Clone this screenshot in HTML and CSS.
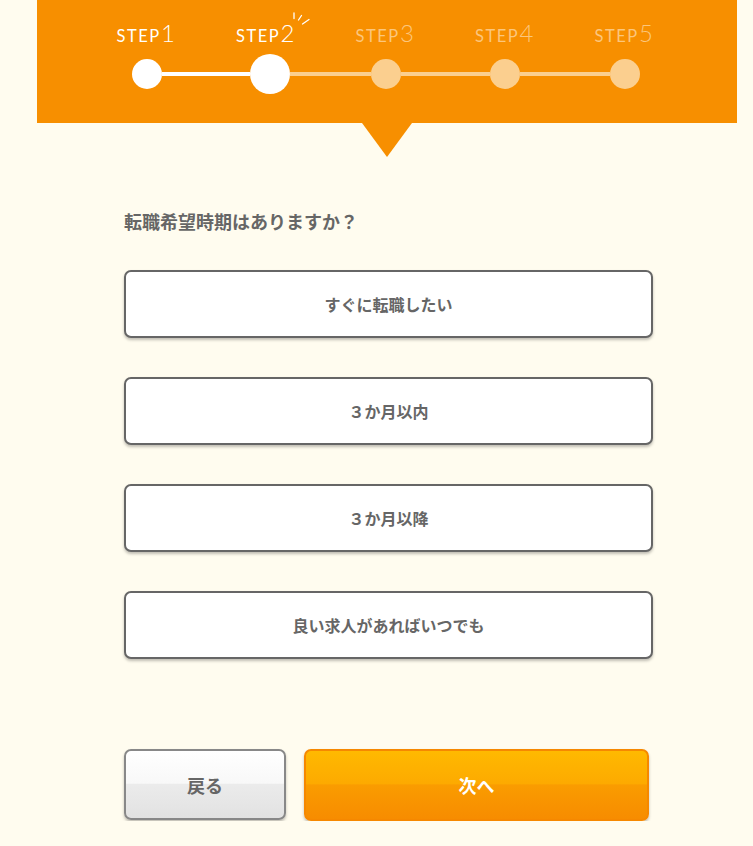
FILE: index.html
```html
<!DOCTYPE html>
<html lang="ja">
<head>
<meta charset="utf-8">
<title>STEP2</title>
<link rel="stylesheet" href="styles.css">
</head>
<body>
<div class="page">
  <header class="steps">
    <div class="labels">
      <div class="label on"><span class="word">STEP</span><span class="num">1</span></div>
      <div class="label on cur"><span class="word">STEP</span><span class="num">2</span>
        <svg class="spark" width="22" height="16" viewBox="0 0 22 16"><g stroke="#fff" stroke-width="1.3" stroke-linecap="round" fill="none"><line x1="4" y1="2" x2="4" y2="7.5"/><line x1="8.5" y1="9" x2="11.5" y2="4.5"/><line x1="12.5" y1="13" x2="19" y2="8.5"/></g></svg>
      </div>
      <div class="label"><span class="word">STEP</span><span class="num">3</span></div>
      <div class="label"><span class="word">STEP</span><span class="num">4</span></div>
      <div class="label"><span class="word">STEP</span><span class="num">5</span></div>
    </div>
    <div class="track">
      <span class="dot on"></span>
      <span class="seg on s1"></span>
      <span class="dot on big"></span>
      <span class="seg s2"></span>
      <span class="dot"></span>
      <span class="seg s3"></span>
      <span class="dot"></span>
      <span class="seg s4"></span>
      <span class="dot"></span>
    </div>
  </header>

  <main class="content">
    <p class="question">転職希望時期はありますか？</p>
    <div class="options">
      <button class="option">すぐに転職したい</button>
      <button class="option">３か月以内</button>
      <button class="option">３か月以降</button>
      <button class="option">良い求人があればいつでも</button>
    </div>
    <div class="nav">
      <button class="btn back">戻る</button>
      <button class="btn next">次へ</button>
    </div>
  </main>
</div>
</body>
</html>
```

FILE: styles.css
```css
html, body {
  margin: 0;
  padding: 0;
  background: #fffcef;
}
body {
  font-family: "Noto Sans CJK JP", "Noto Sans", sans-serif;
  color: #666;
}
.page {
  width: 700px;
  margin-left: 37px;
}
.steps {
  position: relative;
  height: 123px;
  background: #f78f00;
  box-sizing: border-box;
  padding-top: 21px;
}
.steps::after {
  content: "";
  position: absolute;
  left: 325px;
  top: 123px;
  border-left: 25px solid transparent;
  border-right: 25px solid transparent;
  border-top: 34px solid #f78f00;
}
.labels {
  display: flex;
  margin-left: 49px;
  height: 24px;
}
.label {
  position: relative;
  width: 119.5px;
  text-align: center;
  font-family: "Lato", "Open Sans", sans-serif;
  line-height: 24px;
  color: #fcc67c;
  white-space: nowrap;
}
.label.on { color: #fff; }
.label .word {
  font-size: 16.5px;
  font-weight: 400;
  letter-spacing: 1.5px;
  margin-right: 0.5px;
}
.label .num {
  font-size: 24px;
  font-weight: 300;
}
.spark {
  position: absolute;
  left: 84px;
  top: -10px;
}
.track {
  display: flex;
  align-items: center;
  margin-left: 95px;
  margin-top: 9px;
  height: 40px;
}
.dot {
  width: 30px;
  height: 30px;
  border-radius: 50%;
  background: #fbcf8f;
  flex: none;
}
.dot.on { background: #fff; }
.dot.big { width: 40px; height: 40px; }
.seg {
  height: 4px;
  background: #fbcf8f;
  flex: none;
}
.seg.on { background: #fff; }
.s1 { width: 88px; }
.s2 { width: 81px; }
.s3 { width: 89px; }
.s4 { width: 90px; }

.content {
  padding-left: 87px;
  padding-top: 86px;
}
.question {
  margin: 0;
  font-size: 18px;
  line-height: 24px;
  font-weight: 700;
  color: #666;
}
.options {
  display: flex;
  flex-direction: column;
  gap: 39px;
  margin-top: 37px;
  width: 529px;
}
.option {
  height: 68px;
  box-sizing: border-box;
  border: 2px solid #666;
  border-radius: 7px;
  background: #fff;
  box-shadow: 0 2px 3px rgba(0,0,0,0.25);
  font-family: inherit;
  font-size: 16px;
  font-weight: 700;
  color: #666;
  padding: 0;
}
.nav {
  display: flex;
  gap: 18px;
  margin-top: 90px;
}
.btn {
  box-sizing: border-box;
  border-radius: 7px;
  font-family: inherit;
  font-size: 18px;
  font-weight: 700;
  padding: 0;
  box-shadow: 0 2px 3px rgba(0,0,0,0.25);
}
.back {
  width: 162px;
  height: 71px;
  border: 2px solid #888;
  color: #666;
  background: linear-gradient(#ffffff 0%, #f8f8f8 48%, #ebebeb 50%, #e2e2e2 100%);
}
.next {
  width: 345px;
  height: 72px;
  border: 2px solid #f68800;
  color: #fff;
  background: linear-gradient(#ffb900 0%, #fdaa00 48%, #fa9c00 50%, #f78c00 100%);
}
```
